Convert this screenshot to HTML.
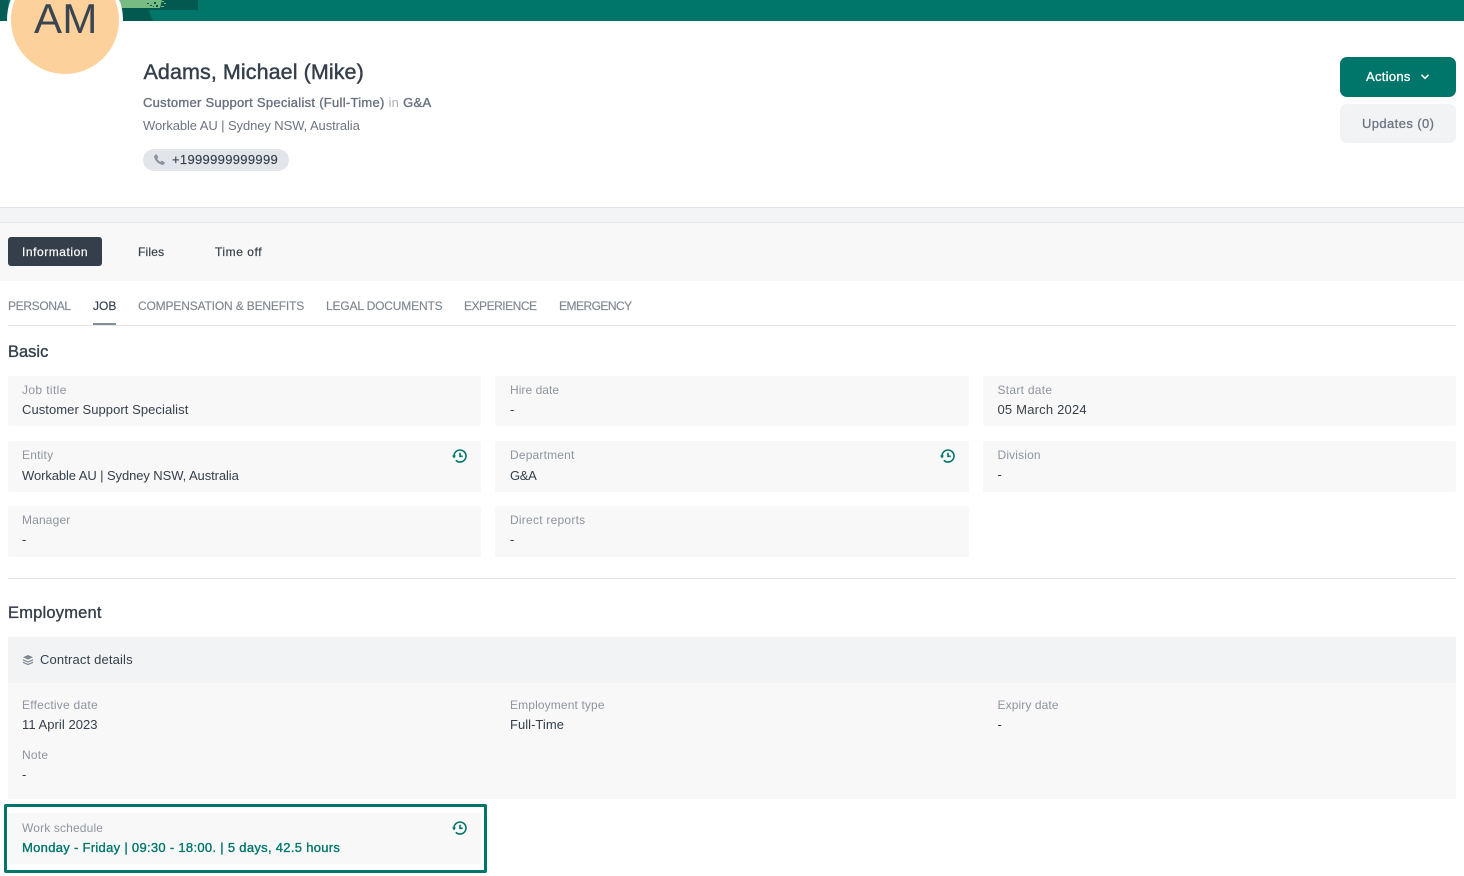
<!DOCTYPE html>
<html>
<head>
<meta charset="utf-8">
<style>
html,body{margin:0;padding:0;background:#fff}
body{width:1464px;height:876px;position:relative;overflow:hidden;font-family:"Liberation Sans",sans-serif;color:#353f4b}
.a{position:absolute}
.t{position:absolute;white-space:nowrap;line-height:18px}
.cell{position:absolute;background:#f8f8f8;border-radius:2px}
.l{font-size:12px;color:#8e95a0;letter-spacing:.22px}
.v{font-size:13px;color:#353f4b;letter-spacing:.1px}
.tab{font-size:12px;color:#7f8792;-webkit-text-stroke:.15px #7f8792}
.sec{font-size:16.5px;color:#353f4b;line-height:20px;-webkit-text-stroke:.35px #353f4b}
</style>
</head>
<body>
<div class="a" style="left:0;top:0;width:1464px;height:21px;background:#00756a"></div>
<div class="a" style="left:0;top:0;width:8px;height:21px;background:#075c53"></div>
<svg class="a" style="left:120px;top:0" width="80" height="21"><polygon points="0,0 78,0 78,10 0,10" fill="#03594f"/><polygon points="0,0 42,0 40,8 0,8" fill="#78bc84"/><g fill="#78bc84"><rect x="42" y="1" width="2" height="1"/><rect x="44" y="3" width="2" height="1"/><rect x="41" y="6" width="3" height="1"/></g><g fill="#03594f"><rect x="27" y="3" width="2" height="1"/><rect x="30" y="5" width="2" height="1"/><rect x="34" y="2" width="2" height="2"/><rect x="36" y="5" width="2" height="2"/><rect x="33" y="6" width="1" height="1"/></g><polygon points="0,9 28,9 33,21 0,21" fill="#03594f"/></svg>
<div class="a" style="left:7px;top:-38px;width:108px;height:108px;border:4px solid #fff;border-radius:50%;background:#fdd19b"></div>
<div class="t" style="left:34px;top:0;font-size:42px;line-height:38px;color:#3a4552;letter-spacing:.3px">AM</div>

<div class="t" style="left:143.500px;top:60px;font-size:21.5px;line-height:24px;color:#353f4b;letter-spacing:.08px;-webkit-text-stroke:.45px #353f4b">Adams, Michael (Mike)</div>
<div class="t" style="left:143px;top:94px;font-size:13px;color:#687180;letter-spacing:.28px;-webkit-text-stroke:.35px #687180">Customer Support Specialist (Full-Time) <span style="color:#a9afb8;-webkit-text-stroke:0">in</span> G&amp;A</div>
<div class="t" style="left:143px;top:117px;font-size:13px;color:#6d7581;letter-spacing:-.09px">Workable AU | Sydney NSW, Australia</div>
<div class="a" style="left:143px;top:149px;width:146px;height:22px;border-radius:11px;background:#e2e6ea"></div>
<svg class="a" style="left:153px;top:153px" width="13" height="13" viewBox="0 0 24 24"><path d="M6.600 2.500l3 4.600c.3.500.2 1-.2 1.400L7.600 10.200c1.200 2.600 3.600 5 6.200 6.200l1.700-1.800c.4-.4.900-.5 1.400-.2l4.600 3c.5.300.6 1 .2 1.500l-2 2.300c-.7.700-1.600 1-2.600.8C10 20.400 3.600 14 2 7.700c-.2-1 .1-1.900.8-2.600L5.100 2.300c.5-.4 1.200-.3 1.500.2z" fill="#8a93a0"/></svg>
<div class="t" style="left:172px;top:151px;font-size:13px;color:#353f4b;letter-spacing:.32px;-webkit-text-stroke:.15px #353f4b">+1999999999999</div>

<div class="a" style="left:1340px;top:57px;width:116px;height:40px;border-radius:7px;background:#00756a"></div>
<div class="t" style="left:1366px;top:68px;font-size:13px;color:#fff;letter-spacing:.3px;-webkit-text-stroke:.3px #fff">Actions</div>
<svg class="a" style="left:1420px;top:73px" width="10" height="8" viewBox="0 0 10 8"><path d="M1.500 1.800L5 5.300l3.500-3.500" fill="none" stroke="#fff" stroke-width="1.500"/></svg>
<div class="a" style="left:1340px;top:104px;width:116px;height:39px;border-radius:7px;background:#f2f3f5"></div>
<div class="t" style="left:1362px;top:115px;font-size:13px;color:#6d7581;letter-spacing:.4px;-webkit-text-stroke:.3px #6d7581">Updates (0)</div>

<div class="a" style="left:0;top:207px;width:1464px;height:1px;background:#e2e6ea"></div>
<div class="a" style="left:0;top:208px;width:1464px;height:14px;background:#f3f4f6"></div>
<div class="a" style="left:0;top:222px;width:1464px;height:1px;background:#e2e6ea"></div>
<div class="a" style="left:0;top:223px;width:1464px;height:58px;background:#f8f8f8"></div>
<div class="a" style="left:8px;top:237px;width:94px;height:29px;border-radius:3px;background:#353f4b"></div>
<div class="t" style="left:22px;top:243px;font-size:12px;color:#fff;letter-spacing:.55px;-webkit-text-stroke:.2px #fff">Information</div>
<div class="t" style="left:138px;top:243px;font-size:12px;color:#353f4b;letter-spacing:.2px;-webkit-text-stroke:.2px #353f4b">Files</div>
<div class="t" style="left:215px;top:243px;font-size:12px;color:#353f4b;letter-spacing:.55px;-webkit-text-stroke:.2px #353f4b">Time off</div>

<div class="t tab" style="left:8px;top:297px;letter-spacing:-.33px">PERSONAL</div>
<div class="t tab" style="left:93px;top:297px;color:#353f4b;letter-spacing:.05px;-webkit-text-stroke:.15px #353f4b">JOB</div>
<div class="t tab" style="left:138px;top:297px;letter-spacing:-.16px">COMPENSATION &amp; BENEFITS</div>
<div class="t tab" style="left:326px;top:297px;letter-spacing:-.16px">LEGAL DOCUMENTS</div>
<div class="t tab" style="left:464px;top:297px;letter-spacing:-.48px">EXPERIENCE</div>
<div class="t tab" style="left:559px;top:297px;letter-spacing:-.52px">EMERGENCY</div>
<div class="a" style="left:8px;top:325px;width:1448px;height:1px;background:#e2e6ea"></div>
<div class="a" style="left:93px;top:323px;width:23px;height:2px;background:#858d98"></div>

<div class="t sec" style="left:8px;top:342px">Basic</div>

<div class="cell" style="left:8px;top:376px;width:473px;height:50px"></div>
<div class="cell" style="left:495px;top:376px;width:474px;height:50px"></div>
<div class="cell" style="left:983px;top:376px;width:473px;height:50px"></div>
<div class="cell" style="left:8px;top:441px;width:473px;height:51px"></div>
<div class="cell" style="left:495px;top:441px;width:474px;height:51px"></div>
<div class="cell" style="left:983px;top:441px;width:473px;height:51px"></div>
<div class="cell" style="left:8px;top:506px;width:473px;height:51px"></div>
<div class="cell" style="left:495px;top:506px;width:474px;height:51px"></div>

<div class="t l" style="left:22px;top:381px;letter-spacing:.38px">Job title</div>
<div class="t v" style="left:22px;top:401px;letter-spacing:.06px">Customer Support Specialist</div>
<div class="t l" style="left:510px;top:381px;letter-spacing:.05px">Hire date</div>
<div class="t v" style="left:510px;top:401px">-</div>
<div class="t l" style="left:997.500px;top:381px;letter-spacing:.28px">Start date</div>
<div class="t v" style="left:997.500px;top:401px;letter-spacing:.2px">05 March 2024</div>

<div class="t l" style="left:22px;top:446px">Entity</div>
<div class="t v" style="left:22px;top:467px;letter-spacing:-.09px">Workable AU | Sydney NSW, Australia</div>
<div class="t l" style="left:510px;top:446px;letter-spacing:.18px">Department</div>
<div class="t v" style="left:510px;top:467px;letter-spacing:-.3px">G&amp;A</div>
<div class="t l" style="left:997.500px;top:446px;letter-spacing:.15px">Division</div>
<div class="t v" style="left:997.500px;top:466px">-</div>

<div class="t l" style="left:22px;top:511px;letter-spacing:.15px">Manager</div>
<div class="t v" style="left:22px;top:531px">-</div>
<div class="t l" style="left:510px;top:511px;letter-spacing:.24px">Direct reports</div>
<div class="t v" style="left:510px;top:531px">-</div>

<svg class="a" style="left:451.500px;top:449px" width="15" height="15" viewBox="0 0 15 15"><path d="M2 7a6 6 0 1 1 1.800 4.300M8 3.800v3.500h2.700" fill="none" stroke="#00756a" stroke-width="1.600"/><path d="M0 6.500h4L2 9.500z" fill="#00756a"/></svg>
<svg class="a" style="left:939.500px;top:449px" width="15" height="15" viewBox="0 0 15 15"><path d="M2 7a6 6 0 1 1 1.800 4.300M8 3.800v3.500h2.700" fill="none" stroke="#00756a" stroke-width="1.600"/><path d="M0 6.500h4L2 9.500z" fill="#00756a"/></svg>

<div class="a" style="left:8px;top:578px;width:1448px;height:1px;background:#e2e6ea"></div>
<div class="t sec" style="left:8px;top:603px;letter-spacing:.2px">Employment</div>

<div class="a" style="left:8px;top:637px;width:1448px;height:46px;background:#f2f3f5"></div>
<div class="a" style="left:8px;top:683px;width:1448px;height:116px;background:#f8f8f8"></div>
<svg class="a" style="left:22px;top:654px" width="12" height="12" viewBox="0 0 12 12"><path d="M6 1L11 3.300 6 5.600 1 3.300z" fill="#7f8792"/><path d="M1 5.800L6 8l5-2.200M1 8.300l5 2.200 5-2.200" fill="none" stroke="#7f8792" stroke-width="1.200"/></svg>
<div class="t v" style="left:40px;top:651px;letter-spacing:.15px">Contract details</div>

<div class="t l" style="left:22px;top:696px;letter-spacing:.24px">Effective date</div>
<div class="t v" style="left:22px;top:716px;letter-spacing:.05px">11 April 2023</div>
<div class="t l" style="left:510px;top:696px;letter-spacing:.13px">Employment type</div>
<div class="t v" style="left:510px;top:716px;letter-spacing:.03px">Full-Time</div>
<div class="t l" style="left:997.500px;top:696px;letter-spacing:.1px">Expiry date</div>
<div class="t v" style="left:997.500px;top:716px">-</div>
<div class="t l" style="left:22px;top:746px">Note</div>
<div class="t v" style="left:22px;top:766px">-</div>

<div class="a" style="left:4px;top:804px;width:477px;height:63px;border:3px solid #00756a;border-radius:2px"></div>
<div class="cell" style="left:8px;top:813px;width:473px;height:51px"></div>
<div class="t l" style="left:22px;top:819px;letter-spacing:.15px">Work schedule</div>
<div class="t" style="left:22px;top:839px;font-size:13px;color:#00756a;letter-spacing:.3px;-webkit-text-stroke:.35px #00756a">Monday - Friday | 09:30 - 18:00. | 5 days, 42.5 hours</div>
<svg class="a" style="left:451.500px;top:821px" width="15" height="15" viewBox="0 0 15 15"><path d="M2 7a6 6 0 1 1 1.800 4.300M8 3.800v3.500h2.700" fill="none" stroke="#00756a" stroke-width="1.600"/><path d="M0 6.500h4L2 9.500z" fill="#00756a"/></svg>
</body>
</html>
